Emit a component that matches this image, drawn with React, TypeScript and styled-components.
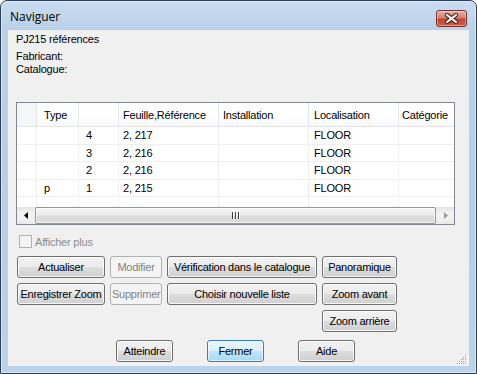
import styled, { createGlobalStyle, css } from "styled-components";

const GlobalStyle = createGlobalStyle`
  html, body {
    margin: 0;
    padding: 0;
    background: #ffffff;
  }
  body {
    font-family: "Liberation Sans", Arial, sans-serif;
    font-size: 11px;
    letter-spacing: -0.2px;
    color: #000;
  }
  * {
    box-sizing: border-box;
  }
`;

const columns = [
  { title: "", width: 20, indent: 5 },
  { title: "Type", width: 42, indent: 7 },
  { title: "", width: 40, indent: 7 },
  { title: "Feuille,Référence", width: 100, indent: 4 },
  { title: "Installation", width: 90, indent: 4 },
  { title: "Localisation", width: 90, indent: 5 },
  { title: "Catégorie", width: 90, indent: 3 },
];

const rows = [
  ["", "", "4", "2, 217", "", "FLOOR", ""],
  ["", "", "3", "2, 216", "", "FLOOR", ""],
  ["", "", "2", "2, 216", "", "FLOOR", ""],
  ["", "p", "1", "2, 215", "", "FLOOR", ""],
  ["", "", "", "", "", "", ""],
];

const gridTemplate = columns.map((c) => `${c.width}px`).join(" ");

export default function App() {
  return (
    <>
      <GlobalStyle />
      <Window>
        <TitleBar>
          <Title>Naviguer</Title>
          <CloseButton>
            <svg width="15" height="11" viewBox="0 0 15 11">
              <path d="M3 2 L12 9 M12 2 L3 9" stroke="#4a2420" strokeWidth="4.2" strokeLinecap="round" />
              <path d="M3 2 L12 9 M12 2 L3 9" stroke="#ffffff" strokeWidth="2.2" strokeLinecap="round" />
            </svg>
          </CloseButton>
        </TitleBar>
        <Client>
          <Info>
            <InfoLine>PJ215 références</InfoLine>
            <InfoLine $top={4}>Fabricant:</InfoLine>
            <InfoLine>Catalogue:</InfoLine>
          </Info>

          <ListView>
            <HeaderRow>
              {columns.map((c, i) => (
                <HeaderCell key={i} $indent={c.indent}>
                  {c.title}
                </HeaderCell>
              ))}
            </HeaderRow>
            <Body>
              {rows.map((r, ri) => (
                <Row key={ri}>
                  {r.map((v, ci) => (
                    <Cell key={ci} $indent={columns[ci].indent}>
                      {v}
                    </Cell>
                  ))}
                </Row>
              ))}
            </Body>
            <HScroll>
              <ArrowBox>
                <svg width="4" height="7" viewBox="0 0 4 7">
                  <path d="M4 0 L0 3.5 L4 7 Z" fill="#000" />
                </svg>
              </ArrowBox>
              <Thumb>
                <Grip>
                  <i />
                  <i />
                  <i />
                </Grip>
              </Thumb>
              <ArrowBox>
                <svg width="4" height="7" viewBox="0 0 4 7">
                  <path d="M0 0 L4 3.5 L0 7 Z" fill="#9a9a9a" />
                </svg>
              </ArrowBox>
            </HScroll>
          </ListView>

          <CheckRow>
            <CheckBox />
            <CheckLabel>Afficher plus</CheckLabel>
          </CheckRow>

          <ButtonGrid>
            <Button>Actualiser</Button>
            <Button disabled>Modifier</Button>
            <Button>Vérification dans le catalogue</Button>
            <Button>Panoramique</Button>
            <Button>Enregistrer Zoom</Button>
            <Button disabled>Supprimer</Button>
            <Button>Choisir nouvelle liste</Button>
            <Button>Zoom avant</Button>
            <Button $col={4}>Zoom arrière</Button>
          </ButtonGrid>

          <Footer>
            <Button $wide>Atteindre</Button>
            <Button $wide $default>
              Fermer
            </Button>
            <Button $wide>Aide</Button>
          </Footer>

          <SizeGrip>
            <svg width="12" height="12" viewBox="0 0 12 12">
              {[
                [10, 2], [10, 4], [8, 4], [10, 6], [8, 6], [6, 6],
                [10, 8], [8, 8], [6, 8], [4, 8],
                [10, 10], [8, 10], [6, 10], [4, 10], [2, 10],
              ].map(([x, y], i) => (
                <g key={i}>
                  <rect x={x} y={y} width="1" height="1" fill="#a0a0a0" />
                  <rect x={x + 1} y={y + 1} width="1" height="1" fill="#ffffff" />
                </g>
              ))}
            </svg>
          </SizeGrip>
        </Client>
      </Window>
    </>
  );
}

const Window = styled.div`
  width: 477px;
  height: 374px;
  display: flex;
  flex-direction: column;
  border: 1px solid #2c425c;
  border-radius: 7px 7px 0 0;
  background: linear-gradient(180deg, #cadcf0 0px, #bad1ea 28px, #b6cee9 60%, #bcd3ec 100%);
  box-shadow: inset 0 0 0 1px rgba(255, 255, 255, 0.45);
`;

const TitleBar = styled.div`
  height: 29px;
  display: flex;
  align-items: flex-start;
  justify-content: space-between;
  padding: 0 9px 0 9px;
`;

const Title = styled.div`
  font-family: "Open Sans", "Liberation Sans", sans-serif;
  font-size: 12px;
  letter-spacing: 0;
  color: #000;
  margin-top: 7px;
`;

const CloseButton = styled.div`
  margin-top: 9px;
  width: 31px;
  height: 17px;
  border: 1px solid #6e3530;
  border-radius: 3px;
  background: linear-gradient(180deg, #e8aea5 0%, #d7806f 45%, #c2432f 55%, #c9604e 100%);
  box-shadow: inset 0 0 0 1px rgba(255, 255, 255, 0.35);
  display: flex;
  align-items: center;
  justify-content: center;
`;

const Client = styled.div`
  position: relative;
  flex: 1;
  margin: 0 7px 7px 7px;
  background: #f0f0f0;
  display: flex;
  flex-direction: column;
  padding: 3px 0 0 8px;
`;

const Info = styled.div`
  display: flex;
  flex-direction: column;
`;

const InfoLine = styled.div<{ $top?: number }>`
  height: 13px;
  line-height: 13px;
  margin-top: ${(p) => p.$top ?? 0}px;
`;

const ListView = styled.div`
  margin-top: 26px;
  width: 439px;
  height: 123px;
  border: 1px solid #828790;
  background: #ffffff;
  display: flex;
  flex-direction: column;
  overflow: hidden;
`;

const cellBase = css<{ $indent: number }>`
  padding-left: ${(p) => p.$indent}px;
  white-space: nowrap;
  overflow: hidden;
  display: flex;
  align-items: center;
`;

const HeaderRow = styled.div`
  display: grid;
  grid-template-columns: ${gridTemplate};
  height: 24px;
  flex: none;
  border-bottom: 1px solid #e5e5e5;
  background: linear-gradient(180deg, #ffffff 0%, #ffffff 60%, #f7f8fa 100%);
`;

const HeaderCell = styled.div<{ $indent: number }>`
  ${cellBase}
  border-right: 1px solid #e3e6eb;
  padding-top: 1px;
  &:first-child {
    background: #f5f6f7;
  }
`;

const Body = styled.div`
  flex: 1;
  overflow: hidden;
`;

const Row = styled.div`
  display: grid;
  grid-template-columns: ${gridTemplate};
  height: 17.5px;
  border-bottom: 1px solid #f0f0f0;
`;

const Cell = styled.div<{ $indent: number }>`
  ${cellBase}
  border-right: 1px solid #f0f0f0;
`;

const HScroll = styled.div`
  flex: none;
  height: 17px;
  display: flex;
  background: linear-gradient(180deg, #e3e3e3 0%, #f2f2f2 30%, #f2f2f2 70%, #e8e8e8 100%);
`;

const ArrowBox = styled.div`
  width: 17px;
  height: 17px;
  display: flex;
  align-items: center;
  justify-content: center;
`;

const Thumb = styled.div`
  flex: 1;
  margin: 0 1px;
  border: 1px solid #979797;
  border-radius: 2px;
  background: linear-gradient(180deg, #f6f6f6 0%, #ececec 45%, #dcdcdc 55%, #d8d8d8 100%);
  box-shadow: inset 0 0 0 1px rgba(255, 255, 255, 0.7);
  display: flex;
  align-items: center;
  justify-content: center;
`;

const Grip = styled.div`
  display: flex;
  gap: 1px;
  i {
    width: 1px;
    height: 7px;
    background: #3f3f3f;
    box-shadow: 1px 0 0 #ffffff;
    margin-right: 1px;
  }
`;

const CheckRow = styled.div`
  margin-top: 10px;
  margin-left: 3px;
  display: flex;
  align-items: center;
  gap: 3px;
  height: 13px;
`;

const CheckBox = styled.div`
  width: 13px;
  height: 13px;
  border: 1px solid #b1b1b1;
  background: #f4f4f4;
`;

const CheckLabel = styled.span`
  color: #8d8d8d;
`;

const ButtonGrid = styled.div`
  margin-top: 8px;
  margin-left: 1px;
  display: grid;
  grid-template-columns: 88px 52px 150px 75px;
  grid-auto-rows: 22px;
  column-gap: 5px;
  row-gap: 5px;
`;

const Button = styled.button<{ $col?: number; $wide?: boolean; $default?: boolean }>`
  font-family: "Liberation Sans", Arial, sans-serif;
  font-size: 11px;
  letter-spacing: -0.25px;
  height: 22px;
  padding: 0 1px;
  white-space: nowrap;
  color: #000;
  border: 1px solid #707070;
  border-radius: 3px;
  background: linear-gradient(180deg, #f2f2f2 0%, #ebebeb 48%, #dddddd 52%, #cfcfcf 100%);
  box-shadow: inset 0 0 0 1px rgba(255, 255, 255, 0.8);
  ${(p) => p.$col && `grid-column: ${p.$col};`}
  ${(p) => p.$wide && `width: 57px;`}
  ${(p) =>
    p.$default &&
    `
    border-color: #3c7fb1;
    background: linear-gradient(180deg, #eaf6fd 0%, #d9f0fc 48%, #bee6fd 52%, #a7d9f5 100%);
    box-shadow: inset 0 0 0 1px rgba(255, 255, 255, 0.6);
  `}
  &:disabled {
    color: #838383;
    border-color: #adb2b5;
    background: #f4f4f4;
    box-shadow: none;
  }
`;

const Footer = styled.div`
  margin-top: 8px;
  padding-left: 100px;
  display: flex;
  gap: 34px;
`;

const SizeGrip = styled.div`
  position: absolute;
  right: 2px;
  bottom: 1px;
  width: 12px;
  height: 12px;
  display: flex;
`;
